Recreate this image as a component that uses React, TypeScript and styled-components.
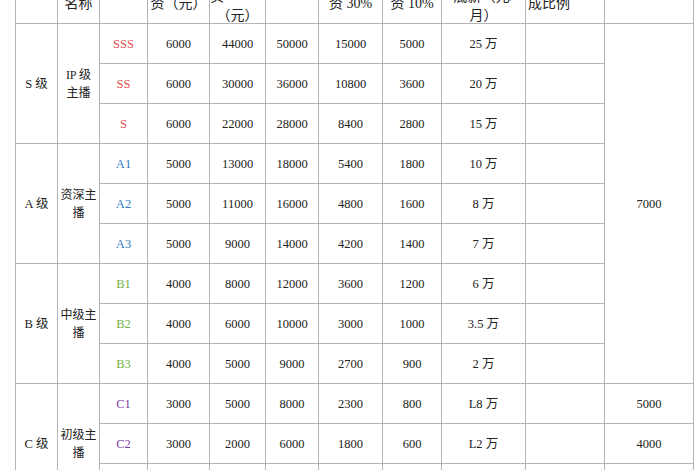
import React from 'react';
import styled, { createGlobalStyle } from 'styled-components';

type Tone = 'red' | 'blue' | 'green' | 'purple';

const toneColor: Record<Tone, string> = {
  red: '#e0514f',
  blue: '#2f7dc0',
  green: '#73b043',
  purple: '#7b3fa3',
};

const GlobalStyle = createGlobalStyle`
  body {
    margin: 0;
    background: #ffffff;
  }
`;

const Page = styled.div`
  height: 470px;
  overflow: hidden;
  padding-left: 15px;
`;

const Sheet = styled.table`
  border-collapse: collapse;
  table-layout: fixed;
  width: 679px;
  margin-top: -28px;
  font-family: 'Liberation Serif', 'Noto Sans CJK SC', serif;
  color: #222222;
`;

const HeadCell = styled.th`
  height: 50px;
  padding: 0;
  border: 1px solid #b4b4b4;
  font-weight: normal;
  font-size: 14px;
  vertical-align: bottom;
`;

const HeadBox = styled.div<{ $bottom: number; $left?: boolean }>`
  height: 50px;
  overflow: hidden;
  display: flex;
  flex-direction: column;
  justify-content: flex-end;
  gap: 5px;
  padding: 0 2px ${p => p.$bottom}px;
  box-sizing: border-box;
  text-align: ${p => (p.$left ? 'left' : 'center')};
`;

const HeadLine = styled.div<{ $left?: boolean }>`
  line-height: 14px;
  white-space: nowrap;
  ${p => (p.$left ? 'text-align: left; margin-left: -2px;' : '')}
`;

const Row = styled.tr`
  height: 40px;
`;

const Cell = styled.td<{ $tone?: Tone }>`
  padding: 0 2px;
  border: 1px solid #b4b4b4;
  font-size: 12.5px;
  line-height: 18px;
  text-align: center;
  vertical-align: middle;
  white-space: nowrap;
  color: ${p => (p.$tone ? toneColor[p.$tone] : '#222222')};
`;

const GroupCell = styled(Cell)`
  font-size: 12.5px;
`;

const RoleCell = styled(Cell)`
  font-size: 12px;
  line-height: 18px;
  white-space: normal;
`;

const widths = [42, 42, 48, 62, 56, 53, 64, 59, 84, 79, 89];

interface Head {
  lines: string[];
  bottom: number;
  left?: boolean;
  leftFirst?: boolean;
}

const heads: Head[] = [
  { lines: [], bottom: 12 },
  { lines: ['主播', '名称'], bottom: 12 },
  { lines: [], bottom: 12 },
  { lines: ['基本工', '资（元）'], bottom: 12 },
  { lines: ['实', '（元）'], bottom: 0, leftFirst: true },
  { lines: [], bottom: 12 },
  { lines: ['提成工', '资 30%'], bottom: 12 },
  { lines: ['奖金工', '资 10%'], bottom: 12 },
  { lines: ['底薪（元/', '月）'], bottom: 0 },
  { lines: ['主播提', '成比例'], bottom: 12, left: true },
  { lines: [], bottom: 12 },
];

interface Level {
  grade: string;
  role: string[];
  tone: Tone;
  rows: string[][];
  bonus: (string | null)[];
}

const levels: Level[] = [
  {
    grade: 'S 级',
    role: ['IP 级', '主播'],
    tone: 'red',
    rows: [
      ['SSS', '6000', '44000', '50000', '15000', '5000', '25 万'],
      ['SS', '6000', '30000', '36000', '10800', '3600', '20 万'],
      ['S', '6000', '22000', '28000', '8400', '2800', '15 万'],
    ],
    bonus: ['7000', null, null],
  },
  {
    grade: 'A 级',
    role: ['资深主', '播'],
    tone: 'blue',
    rows: [
      ['A1', '5000', '13000', '18000', '5400', '1800', '10 万'],
      ['A2', '5000', '11000', '16000', '4800', '1600', '8 万'],
      ['A3', '5000', '9000', '14000', '4200', '1400', '7 万'],
    ],
    bonus: [null, null, null],
  },
  {
    grade: 'B 级',
    role: ['中级主', '播'],
    tone: 'green',
    rows: [
      ['B1', '4000', '8000', '12000', '3600', '1200', '6 万'],
      ['B2', '4000', '6000', '10000', '3000', '1000', '3.5 万'],
      ['B3', '4000', '5000', '9000', '2700', '900', '2 万'],
    ],
    bonus: [null, null, null],
  },
  {
    grade: 'C 级',
    role: ['初级主', '播'],
    tone: 'purple',
    rows: [
      ['C1', '3000', '5000', '8000', '2300', '800', 'L8 万'],
      ['C2', '3000', '2000', '6000', '1800', '600', 'L2 万'],
      ['C3', '3000', '1000', '4000', '1200', '400', '0.8 万'],
    ],
    bonus: ['5000', '4000', '3000'],
  },
];

export default function App() {
  return (
    <Page>
      <GlobalStyle />
      <Sheet>
        <colgroup>
          {widths.map((w, i) => (
            <col key={i} style={{ width: w }} />
          ))}
        </colgroup>
        <thead>
          <tr>
            {heads.map((h, i) => (
              <HeadCell key={i}>
                <HeadBox $bottom={h.bottom} $left={h.left}>
                  {h.lines.map((line, j) => (
                    <HeadLine key={j} $left={h.leftFirst && j === 0}>
                      {line}
                    </HeadLine>
                  ))}
                </HeadBox>
              </HeadCell>
            ))}
          </tr>
        </thead>
        <tbody>
          {levels.map((lv, li) =>
            lv.rows.map((r, ri) => (
              <Row key={`${li}-${ri}`}>
                {ri === 0 && <GroupCell rowSpan={3}>{lv.grade}</GroupCell>}
                {ri === 0 && (
                  <RoleCell rowSpan={3}>
                    {lv.role[0]}
                    <br />
                    {lv.role[1]}
                  </RoleCell>
                )}
                <Cell $tone={lv.tone}>{r[0]}</Cell>
                {r.slice(1).map((v, k) => (
                  <Cell key={k}>{v}</Cell>
                ))}
                <Cell />
                {li === 0 && ri === 0 && <Cell rowSpan={9}>{lv.bonus[0]}</Cell>}
                {li === 3 && <Cell>{lv.bonus[ri]}</Cell>}
              </Row>
            ))
          )}
        </tbody>
      </Sheet>
    </Page>
  );
}
